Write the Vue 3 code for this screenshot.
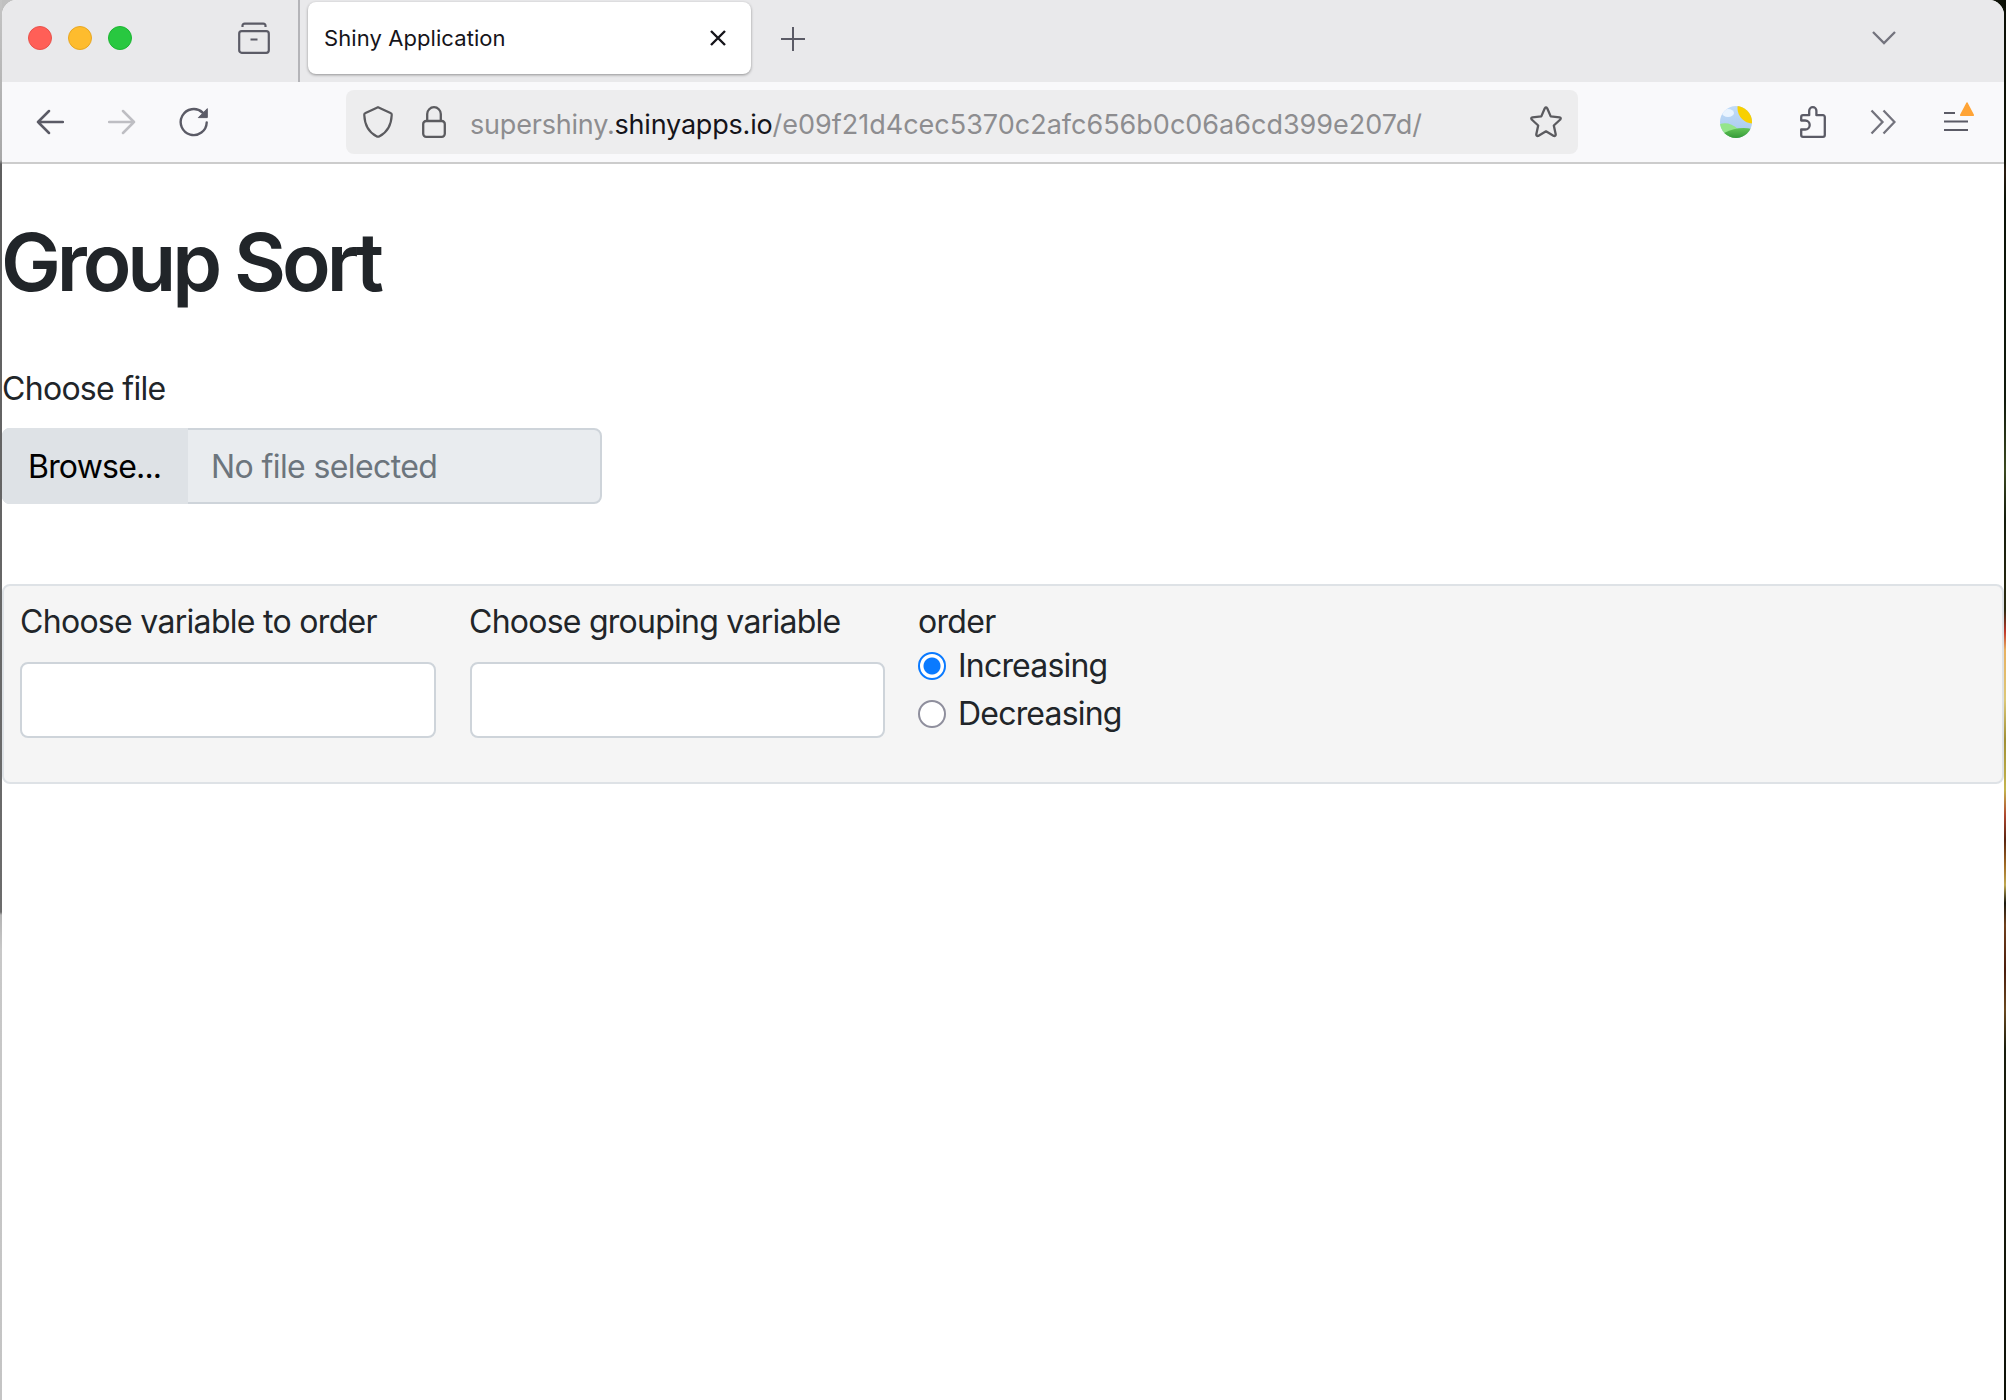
<script setup>
import { ref } from 'vue'

const order = ref('Increasing')
const options = ['Increasing', 'Decreasing']
</script>

<template>
  <div class="desktop">
    <div class="window">
      <div class="tabstrip">
        <div class="lights"><i class="red"></i><i class="amber"></i><i class="green"></i></div>
        <svg class="view" width="32" height="32" viewBox="0 0 32 32" fill="none" stroke="#5b5b66" stroke-width="2.2">
          <path d="M4.500 5V4a2.200 2.200 0 0 1 2.200-2.400h18.600A2.200 2.200 0 0 1 27.500 4v1M12.500 17.500h7" />
          <rect x="1.200" y="9.200" width="29.600" height="21.600" rx="2.500" />
        </svg>
        <div class="separator"></div>
        <div class="tab">
          <span class="title">Shiny Application</span>
          <svg width="16" height="16" viewBox="0 0 16 16" fill="none" stroke="#15141a" stroke-width="2.400"><path d="M1 1l14 14M15 1L1 15" /></svg>
        </div>
        <svg class="plus" width="24" height="24" viewBox="0 0 24 24" fill="none" stroke="#5b5b66" stroke-width="2"><path d="M12 0v24M0 12h24" /></svg>
        <svg class="tabs-menu" width="24" height="14" viewBox="0 0 24 14" fill="none" stroke="#73737d" stroke-width="2.300"><path d="M1 1l11 11L23 1" /></svg>
      </div>

      <div class="toolbar">
        <svg class="back" width="28" height="26" viewBox="0 0 28 26" fill="none" stroke="#5b5b66" stroke-width="2.500" stroke-linecap="round" stroke-linejoin="round"><path d="M27 13H2M13 2L2 13l11 11" /></svg>
        <svg class="forward" width="28" height="26" viewBox="0 0 28 26" fill="none" stroke="#bebec3" stroke-width="2.500" stroke-linecap="round" stroke-linejoin="round"><path d="M1 13h25M15 2l11 11-11 11" /></svg>
        <svg class="reload" width="30" height="30" viewBox="0 0 30 30" fill="none" stroke="#5b5b66" stroke-width="2.400" stroke-linecap="round"><path d="M27.700 15.500A13 13 0 1 1 23.500 5.500" /><path d="M28.300 2v8.600h-8.600z" fill="#5b5b66" stroke-width="1" stroke-linejoin="round" /></svg>
        <div class="urlbar">
          <svg class="shield" width="30" height="32" viewBox="0 0 30 32" fill="none" stroke="#5b5b5f" stroke-width="2.200" stroke-linejoin="round"><path d="M15 1.200L27.500 7a2 2 0 0 1 1.200 2.200C28.300 19 24.500 26 16.500 30.300a3 3 0 0 1-3 0C5.500 26 1.700 19 1.300 9.200A2 2 0 0 1 2.500 7z" /></svg>
          <svg class="lock" width="24" height="32" viewBox="0 0 24 32" fill="none" stroke="#5b5b5f" stroke-width="2.300"><rect x="1.200" y="15" width="21.600" height="15.800" rx="3" /><path d="M5.200 15V8a6.800 6.800 0 0 1 13.600 0v7" /></svg>
          <span class="url"><span class="host">supershiny.<b>shinyapps.io</b></span>/e09f21d4cec5370c2afc656b0c06a6cd399e207d/</span>
          <svg class="star" width="32" height="32" viewBox="0 0 32 32" fill="none" stroke="#5b5b5f" stroke-width="2.300" stroke-linejoin="round"><path d="M14.800 2.300q1.200-1.800 2.400 0l3.500 8.100 8.800.9q2 .4.800 2.200l-6.500 6 1.900 8.700q.1 2.200-1.900 1.700L16 25.300l-7.800 4.600q-2 .5-1.900-1.700l1.900-8.700-6.500-6q-1.200-1.800.8-2.200l8.800-.9z" /></svg>
        </div>
        <svg class="scenery" width="32" height="32" viewBox="0 0 32 32">
          <defs>
            <clipPath id="disc"><circle cx="16" cy="16" r="16" /></clipPath>
            <linearGradient id="sky" x1="0" y1="0" x2="0" y2="1"><stop offset="0" stop-color="#c2dcf8" /><stop offset="1" stop-color="#a5c8ee" /></linearGradient>
            <linearGradient id="hill" x1="0" y1="0" x2="0" y2="1"><stop offset="0" stop-color="#63c557" /><stop offset="1" stop-color="#359a38" /></linearGradient>
          </defs>
          <g clip-path="url(#disc)">
            <rect width="32" height="32" fill="url(#sky)" />
            <ellipse cx="8" cy="7" rx="6" ry="4" fill="#e9f4ff" />
            <circle cx="33" cy="2" r="15.500" fill="#f8d000" />
            <path d="M0 18q9-3 18 5v9H0z" fill="#94e58b" />
            <path d="M4 27q14-7 28-4v9H4z" fill="url(#hill)" />
          </g>
        </svg>
        <svg class="puzzle" width="26" height="32" viewBox="0 0 26 32" fill="none" stroke="#5b5b66" stroke-width="2.300" stroke-linejoin="round"><path d="M1.200 14.500V11a1.800 1.800 0 0 1 1.800-1.800h6.200V4.800a3.600 3.600 0 0 1 7.200 0v4.400H23a1.800 1.800 0 0 1 1.800 1.800v18a1.800 1.800 0 0 1-1.800 1.800H3A1.800 1.800 0 0 1 1.200 29v-5.500h4a4.500 4.500 0 0 0 0-9z" /></svg>
        <svg class="more" width="26" height="26" viewBox="0 0 26 26" fill="none" stroke="#73737d" stroke-width="2.300"><path d="M1.500 1.500L12.500 13l-11 11.500M13.500 1.500L24.500 13l-11 11.500" /></svg>
        <svg class="menu" width="30" height="30" viewBox="0 0 30 30"><path d="M0 11h11M0 19.500h24M0 28h24" stroke="#5b5b66" stroke-width="2.200" /><path d="M23 1L29.300 13.200H16.700z" fill="#ffa436" stroke="#ffa436" stroke-width="1.500" stroke-linejoin="round" /></svg>
      </div>

      <main class="page">
        <h1>Group Sort</h1>
        <label class="file-label">Choose file</label>
        <div class="file-input">
          <span class="browse">Browse...</span>
          <span class="filename">No file selected</span>
        </div>
        <div class="well">
          <div class="field"><label>Choose variable to order</label><div class="select"></div></div>
          <div class="field grouping"><label>Choose grouping variable</label><div class="select"></div></div>
          <div class="field">
            <label>order</label>
            <div v-for="o in options" :key="o" class="radio" @click="order = o">
              <i :class="{ on: order === o }"></i><span>{{ o }}</span>
            </div>
          </div>
        </div>
      </main>
    </div>
  </div>
</template>

<style>
body { margin: 0; overflow: hidden; }
</style>

<style scoped>
* { box-sizing: border-box; }
svg { display: block; flex: none; }
.desktop {
  display: flex; width: 2006px; height: 1400px; padding: 0 2px;
  background:
    linear-gradient(180deg, #c4c4c4 0, #a8a8a8 160px, #5f5f5f 164px, #6c6c6c 912px, #b4b4b4 915px, #c8c8c8 950px, #c4c4c4 100%) left / 2px 100% no-repeat,
    linear-gradient(180deg, #0b0f05 0, #101408 160px, #2a1c10 172px, #0a1206 200px, #101a0c 400px, #3c4a20 470px, #141c0c 520px, #2b2a10 610px, #c0392b 632px, #e8b060 650px, #dcc878 700px, #a08f34 740px, #c5b54e 790px, #b04830 815px, #5a2410 840px, #a06a24 865px, #c0a850 885px, #1c1a10 903px, #70401c 925px, #4a1c0c 970px, #6a4820 1010px, #181c0c 1050px, #0e1208 100%) right / 2px 100% no-repeat,
    linear-gradient(90deg, #c0c0c0 50%, #0e1208 50%);
}
.window {
  width: 2002px; height: 1400px; overflow: hidden; border-radius: 15px 15px 0 0;
  background: #fff; font-family: Inter, "Liberation Sans", sans-serif; color: #212529;
}
.tabstrip { display: flex; align-items: center; height: 82px; background: #e9e9eb; }
.lights { display: flex; gap: 16px; margin: -6px 0 0 26px; }
.lights i { width: 24px; height: 24px; border-width: 1px; border-style: solid; border-radius: 50%; }
.lights .red { background: #ff5f57; border-color: #e9524b; }
.lights .amber { background: #febc2e; border-color: #e8a722; }
.lights .green { background: #28c840; border-color: #1cb632; }
.view { margin: -6px 0 0 106px; }
.separator { width: 2px; height: 82px; margin-left: 28px; background: #b4b4b8; }
.tab {
  display: flex; align-items: center; justify-content: space-between; width: 443px; height: 72px;
  margin: -6px 0 0 8px; padding: 0 25px 0 16px; border-radius: 8px; background: #fff;
  box-shadow: 0 1px 3px rgba(0, 0, 0, .38);
}
.title { font-size: 22px; color: #15141a; letter-spacing: .08px; }
.plus { margin: -4px 0 0 30px; }
.tabs-menu { margin: -7px 0 0 1067px; }
.toolbar { display: flex; align-items: center; height: 82px; background: #f9f9fb; border-bottom: 2px solid #ccc; }
.back { margin-left: 34px; }
.forward { margin-left: 44px; }
.reload { margin-left: 43px; }
.urlbar { display: flex; align-items: center; width: 1232px; height: 64px; margin-left: 137px; padding-left: 17px; border-radius: 8px; background: #ededee; }
.lock { margin-left: 29px; }
.url { width: 1060px; margin-left: 24px; padding-top: 4px; font-size: 27px; color: #8d8d90; white-space: nowrap; }
.host { letter-spacing: -.2px; }
.url b { font-weight: 400; color: #15141a; }
.scenery { margin-left: 142px; }
.puzzle { margin-left: 48px; }
.more { margin-left: 44px; }
.menu { margin: -10px 0 0 48px; }
.page { font-size: 32px; line-height: 48px; letter-spacing: -.7px; }
h1 { margin: 50px 0 0 -1px; font-size: 80px; font-weight: 560; line-height: 96px; letter-spacing: -4.1px; white-space: nowrap; }
.file-label { display: block; height: 48px; margin-top: 54px; padding-top: 1px; }
.file-input { display: flex; width: 600px; height: 76px; margin-top: 16px; border: 2px solid #ced4da; border-radius: 8px; background: #e9ecef; line-height: 74px; white-space: nowrap; }
.browse { width: 186px; height: 76px; margin: -2px 0 0 -2px; padding: 2px 0 0 26px; border-radius: 8px 0 0 8px; background: #dee2e6; color: #000; letter-spacing: -.8px; }
.filename { padding-left: 23px; color: #6c757d; letter-spacing: -.6px; }
.well { display: flex; gap: 33px; height: 200px; margin-top: 80px; padding: 12px 16px; border: 2px solid #dee2e6; border-radius: 8px; background: #f5f5f5; white-space: nowrap; }
.field { width: 416px; }
.field label { display: block; height: 48px; }
.grouping label { letter-spacing: -.75px; }
.grouping .select { margin-left: 1px; }
.select { height: 76px; margin-top: 16px; border: 2px solid #ced4da; border-radius: 8px; background: #fff; }
.radio { display: flex; align-items: center; gap: 12px; height: 48px; letter-spacing: -.8px; }
.radio:nth-child(2) { margin-top: -4px; }
.radio i { width: 28px; height: 28px; border: 2px solid #8f8f9d; border-radius: 50%; background: #fff; }
.radio i.on { border-color: #0a7aff; background: radial-gradient(circle, #0a7aff 8px, #fff 9px); }
</style>
